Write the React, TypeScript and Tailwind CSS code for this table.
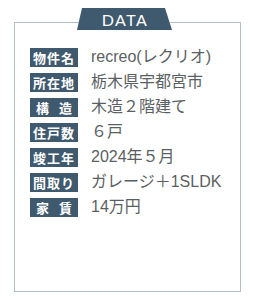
const rows: { label: string; value: string; spread?: boolean }[] = [
  { label: "物件名", value: "recreo(レクリオ)" },
  { label: "所在地", value: "栃木県宇都宮市" },
  { label: "構造", value: "木造２階建て", spread: true },
  { label: "住戸数", value: "６戸" },
  { label: "竣工年", value: "2024年５月" },
  { label: "間取り", value: "ガレージ＋1SLDK" },
  { label: "家賃", value: "14万円", spread: true },
];

export default function App() {
  return (
    <div
      className="w-[254px] h-[300px] bg-white pt-[22px] pl-[14px]"
      style={{ fontFamily: '"Liberation Sans", "Noto Sans CJK JP", sans-serif' }}
    >
      <div className="relative w-[227px] h-[270px] border-[1.5px] border-[#b3bec7]">
        <div className="absolute left-[62px] top-[-15px] w-[96px] h-[22px]">
          <svg width="96" height="22" viewBox="0 0 96 22" className="absolute inset-0">
            <polygon points="5,0 88,0 95,22 0,22" fill="#3f5a6e" />
          </svg>
          <div
            className="relative flex h-full items-center justify-center pt-[1px] text-[16px] tracking-[1.5px] text-white"
            style={{ fontFamily: "Lato, sans-serif" }}
          >
            DATA
          </div>
        </div>
        <div className="flex flex-col gap-[5px] pt-[24px] pl-[15px]">
          {rows.map((r) => (
            <div key={r.label} className="flex h-[20px] items-center">
              <div
                className={
                  "flex h-[19px] w-[48px] items-center bg-[#3f5a6e] text-[13px] font-bold leading-none text-white " +
                  (r.spread ? "justify-between px-[6px]" : "justify-center tracking-[1px]")
                }
                style={{ fontFamily: '"Noto Sans CJK JP", sans-serif' }}
              >
                {r.spread
                  ? r.label.split("").map((c) => <span key={c}>{c}</span>)
                  : r.label}
              </div>
              <div className="ml-[13px] text-[16px] leading-none text-[#5a5f63]">{r.value}</div>
            </div>
          ))}
        </div>
      </div>
    </div>
  );
}
